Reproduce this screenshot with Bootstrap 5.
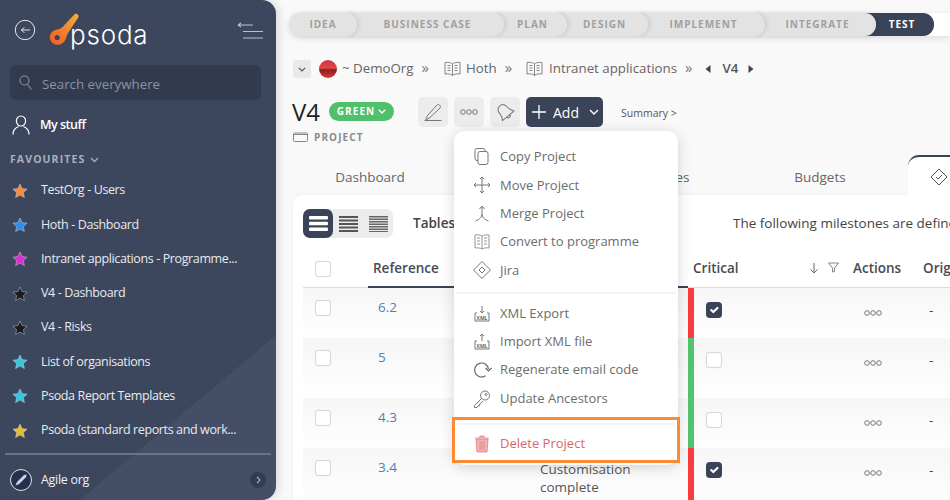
<!DOCTYPE html>
<html lang="en">
<head>
<meta charset="utf-8">
<title>Psoda</title>
<link href="https://cdn.jsdelivr.net/npm/bootstrap@5.3.0/dist/css/bootstrap.min.css" rel="stylesheet">
<style>
html,body{height:500px;overflow:hidden}
body{font-family:"Open Sans",sans-serif;background:#f9f9f9;color:#555;font-size:13px}
svg{display:block;flex:none}
.side{width:276px;height:500px;flex:none;color:#e9ebef;border-radius:0 14px 14px 0;background:linear-gradient(140deg,#3c465d 0 77.5%,#454e67 77.5%);box-shadow:3px 0 10px rgba(0,0,0,.12);position:relative;z-index:5;padding:14px 5px 0 5px}
.side>*{flex:none}
.toprow{height:36px;padding-left:9px}
.backicon{margin-top:4px}
.logomark{margin-left:13px;margin-top:-1px}
.wordmark{font-family:Inter,sans-serif;font-weight:300;font-size:26px;line-height:30px;letter-spacing:.8px;color:#fff;margin-left:-11px;margin-top:6px}
.searchbox{margin:15px 10px 0 5px;height:35px;background:#323a4e;border-radius:6px;color:#8b93a5;font-size:13.3px;padding-left:9px;gap:10px}
.searchbox span{padding-top:4px}
.mystuff{height:35px;margin-top:7.5px;padding-left:7px;gap:10px;color:#fff;font-weight:600;font-size:12.5px;letter-spacing:-.5px}
.favhead{margin:9px 0 0 5px;font-size:10.5px;font-weight:700;letter-spacing:1.1px;color:#a9afbc;height:17px;gap:5px}
.favlist{margin-top:5px}
.favrow{height:34.3px;padding-left:7px;gap:13px;font-size:12.5px;letter-spacing:-.38px;color:#e8eaee;white-space:nowrap}
.sidehr{height:2px;background:#697287;margin:5.3px 0 0 0;width:266px}
.orgrow{height:45px;padding:5px 0 0 5px;gap:9px;font-size:12.5px;font-weight:500;letter-spacing:-.3px;color:#eef0f3;width:266px}
.orgdot{width:22px;height:22px;border-radius:50%;border:1px solid #dfe3ea;background:#27304a}
.orgnext{width:16px;height:16px;border-radius:50%;background:#333b4f;margin-left:auto;margin-right:5px}
.content{flex:1;min-width:0;height:500px;position:relative;overflow:hidden;padding-top:13px}
.stages{margin-left:13px;height:23px;background:#fff;box-shadow:0 2px 6px rgba(0,0,0,.12);border-radius:10px 0 0 10px}
.stage{height:23px;background:#e3e3e3;border-radius:0 11px 11px 0;margin-left:-11px;box-shadow:2px 0 4px rgba(0,0,0,.1);color:#a0a0a0;font-size:10px;font-weight:700;letter-spacing:1px;padding-left:11px;padding-right:6px;position:relative;flex:none}
.stage:first-child{margin-left:0;border-radius:10px 11px 11px 10px;padding-left:0;padding-right:0}
.stage-now{background:#3a4459;color:#fff;box-shadow:none}
.crumbs{margin:24px 0 0 17px;height:18px;font-size:13.3px;color:#666;white-space:nowrap}
.crumbtoggle{width:18px;height:18px;border-radius:3px;background:#e9e9e9;margin-right:8px}
.avatar{width:18px;height:18px;border-radius:50%;background:linear-gradient(#c9344c 0,#e2473b 45%,#8c1f25 55%,#d9372f 100%);margin-right:5px}
.chev{color:#777;font-size:15px;margin-bottom:4px}
.headrow{margin:19px 0 0 16px;height:30px}
.titleword{font-size:24px;line-height:30px;color:#222;width:37px}
.ragpill{width:65px;height:19px;border-radius:10px;background:#4fc06b;color:#fff;font-size:10px;font-weight:700;letter-spacing:1.1px;gap:3px;margin-top:-1px}
.toolbtn{width:30px;height:30px;background:#ececec;border-radius:5px;padding:0;border:0;margin-right:6px}
.addbtn{width:77px;height:30px;background:#3a4459;border-radius:5px;color:#fff;font-size:14px;border:0;padding:0 0 0 4px;gap:5px}
.summarylink{font-size:10.5px;color:#555;margin:4px 0 0 18px}
.kind{margin:2px 0 0 17px;height:16px;gap:6px;font-size:10px;font-weight:700;letter-spacing:1.1px;color:#8a8a8a}
.tabrow{margin:10px 0 0 19px;height:40px;white-space:nowrap;color:#666;font-size:13.5px}
.tabitem{width:150px;flex:none;text-align:center;line-height:44px}
.tabon{margin-left:13px;width:120px;flex:none;background:#fff;border-radius:11px 0 0 0;border-top:2px solid #3a4459;padding:11px 0 0 22px}
.sheet{margin-left:17px;width:657px;background:#fff;border-radius:10px 0 0 0;height:320px;padding:14px 0 0 10px;box-shadow:0 0 5px rgba(0,0,0,.06)}
.densities{width:90px;height:29px;background:#ececec;border-radius:7px;flex:none}
.density{width:30px;height:29px;border-radius:7px}
.density-on{background:#3a4459}
.sheethead{height:29px;font-size:13.5px;white-space:nowrap;color:#444}
.tabletitle{margin-left:20px;font-weight:600;width:320px;flex:none}
.miletable{table-layout:fixed;width:690px;margin:12px 0 0 0;border-collapse:separate;border-spacing:0;font-size:13.5px}
.miletable th{height:38px;font-weight:600;color:#4a4a55;border-bottom:1px solid #ddd;vertical-align:middle;padding:0 0 0 5px;background:#fff;white-space:nowrap;position:relative}
.miletable td{padding:0;vertical-align:top;background:linear-gradient(#f6f6f6,#fff);border:0}
.th-ref{border-bottom:2px solid #3a4459 !important}
.rowtall{height:60px}.rowshort{height:50px}
.tick{width:16px;height:16px;margin:0;border:1px solid #d4d7de;border-radius:3px;box-shadow:0 0 1px rgba(0,0,0,.1)}
.tick:checked{background-color:#3a4459;border-color:#3a4459}
.th-check{padding:6px 0 0 12px !important}
.cell-check{padding:12px 0 0 12px !important}
.cell-ref{padding:9px 0 0 10px !important;color:#4f80b5}
.cell-name{padding:12px 0 0 2px !important;line-height:18px;color:#555}
.cell-crit{padding:14px 0 0 12px !important;border-left:6px solid #f93c3c !important}
.crit-ok{border-left-color:#52c36f !important}
.cell-act{padding:22px 0 0 16px !important}
.cell-orig{padding:12px 0 0 11px !important;color:#444}
.sorticons{position:absolute;right:9px;top:12px;gap:9px}
.actionsmenu{display:block;width:224px;height:334px;left:0;top:34px;margin:0;padding:12px 0 0 0;border:0;border-radius:10px;box-shadow:0 2px 14px rgba(0,0,0,.16);z-index:20}
.menuitem{height:28.3px;padding:0 0 0 18px;gap:8px;color:#6d6d6d;font-size:13px;background:none;white-space:nowrap}
.menuitem svg{width:20px;height:20px}
.menuline{margin:8px 3px 5px 3px;border-top:2px solid #f3f3f3;opacity:1}
.menuline-low{margin:10px 3px 5px 3px}
.menudanger{color:#d9686a}
.callout{position:absolute;left:-2px;top:286px;width:228px;height:46px;border:3px solid #fb8a33;pointer-events:none}
.grouphost{position:relative}
</style>
</head>
<body class="d-flex">
<aside class="side d-flex flex-column">
  <div class="toprow d-flex align-items-start">
    <svg width="22" height="22" viewBox="0 0 22 22" class="backicon" fill="none" stroke="#e6e9ee" stroke-width="1"><circle cx="11" cy="12" r="9.700"/><path d="M15.500 12H7.500M10 9.500 7.500 12l2.500 2.500" stroke-linecap="round"/></svg>
    <svg width="32" height="34" viewBox="0 0 32 34" class="logomark"><defs><linearGradient id="lg" x1="0" y1="1" x2="1" y2="0"><stop offset="0" stop-color="#ef5a2a"/><stop offset=".55" stop-color="#f4872f"/><stop offset="1" stop-color="#f7ae3a"/></linearGradient></defs><path fill-rule="evenodd" d="M25.500 1.200c2.300-1.500 5 .8 3.800 3.300l-9.300 14c-1.100 1.700-1.700 2.800-2.500 5.200-1.200 4.800-4.600 8-8.700 8C4 31.700.8 28.500.8 24.400c0-4 3.100-7.200 7.100-7.900 3-.4 4.700-1.300 6.400-3.300zM8.200 22a2.600 2.600 0 1 0 .01 0z" fill="url(#lg)"/></svg>
    <span class="wordmark">psoda</span>
    <svg width="26" height="18" viewBox="0 0 26 18" class="ms-auto me-2 mt-2" fill="none" stroke="#b9bfcb" stroke-width="1.100"><path d="M1 3h15M1 3l3-2M1 3l3 2M6 9.500h20M6 16h20"/></svg>
  </div>
  <div class="searchbox d-flex align-items-center">
    <svg width="13" height="15" viewBox="0 0 13 15" fill="none" stroke="#8b93a5" stroke-width="1.100"><circle cx="5.500" cy="5.500" r="4.500"/><path d="M8.500 9.500 12.500 14.500"/></svg>
    <span>Search everywhere</span>
  </div>
  <div class="mystuff d-flex align-items-center">
    <svg width="18" height="20" viewBox="0 0 18 20" fill="none" stroke="#fff" stroke-width="1.200"><ellipse cx="9" cy="6" rx="4.600" ry="5"/><path d="M1 19.500c0-4.500 3-7 5.500-8M17 19.500c0-4.500-3-7-5.500-8"/></svg>
    <span>My stuff</span>
  </div>
  <div class="favhead d-flex align-items-center">FAVOURITES
    <svg width="9" height="6" viewBox="0 0 9 6" fill="none" stroke="#a9afbc" stroke-width="1.300"><path d="M1 1l3.500 3.500L8 1"/></svg>
  </div>
  <div class="favlist">
    <div class="favrow d-flex align-items-center"><svg width="16" height="16" viewBox="0 0 16 16"><path d="M8 1l2.100 4.600 5 .6-3.700 3.400 1 5L8 12.100 3.600 14.600l1-5L.9 6.200l5-.6z" fill="#f58b3d" stroke="#c9cdd6" stroke-width=".5"/></svg><span>TestOrg - Users</span></div>
    <div class="favrow d-flex align-items-center"><svg width="16" height="16" viewBox="0 0 16 16"><path d="M8 1l2.100 4.600 5 .6-3.700 3.400 1 5L8 12.100 3.600 14.600l1-5L.9 6.200l5-.6z" fill="#2f8ce8" stroke="#c9cdd6" stroke-width=".5"/></svg><span>Hoth - Dashboard</span></div>
    <div class="favrow d-flex align-items-center"><svg width="16" height="16" viewBox="0 0 16 16"><path d="M8 1l2.100 4.600 5 .6-3.700 3.400 1 5L8 12.100 3.600 14.600l1-5L.9 6.200l5-.6z" fill="#e02bd0" stroke="#c9cdd6" stroke-width=".5"/></svg><span>Intranet applications - Programme...</span></div>
    <div class="favrow d-flex align-items-center"><svg width="16" height="16" viewBox="0 0 16 16"><path d="M8 1l2.100 4.600 5 .6-3.700 3.400 1 5L8 12.100 3.600 14.600l1-5L.9 6.200l5-.6z" fill="#1c1c1e" stroke="#9aa0ac" stroke-width=".7"/></svg><span>V4 - Dashboard</span></div>
    <div class="favrow d-flex align-items-center"><svg width="16" height="16" viewBox="0 0 16 16"><path d="M8 1l2.100 4.600 5 .6-3.700 3.400 1 5L8 12.100 3.600 14.600l1-5L.9 6.200l5-.6z" fill="#1c1c1e" stroke="#9aa0ac" stroke-width=".7"/></svg><span>V4 - Risks</span></div>
    <div class="favrow d-flex align-items-center"><svg width="16" height="16" viewBox="0 0 16 16"><path d="M8 1l2.100 4.600 5 .6-3.700 3.400 1 5L8 12.100 3.600 14.600l1-5L.9 6.200l5-.6z" fill="#35c6e0" stroke="#c9cdd6" stroke-width=".5"/></svg><span>List of organisations</span></div>
    <div class="favrow d-flex align-items-center"><svg width="16" height="16" viewBox="0 0 16 16"><path d="M8 1l2.100 4.600 5 .6-3.700 3.400 1 5L8 12.100 3.600 14.600l1-5L.9 6.200l5-.6z" fill="#35c6e0" stroke="#c9cdd6" stroke-width=".5"/></svg><span>Psoda Report Templates</span></div>
    <div class="favrow d-flex align-items-center"><svg width="16" height="16" viewBox="0 0 16 16"><path d="M8 1l2.100 4.600 5 .6-3.700 3.400 1 5L8 12.100 3.600 14.600l1-5L.9 6.200l5-.6z" fill="#e8bd2e" stroke="#c9cdd6" stroke-width=".5"/></svg><span>Psoda (standard reports and work...</span></div>
  </div>
  <div class="sidehr"></div>
  <div class="orgrow d-flex align-items-center">
    <span class="orgdot d-flex align-items-center justify-content-center"><svg width="14" height="14" viewBox="0 0 14 14"><path d="M1.500 12.500 3 9l7-7 2.500-.5-.3 2.500-7 7z" fill="#bcd6f2"/></svg></span>
    <span>Agile org</span>
    <span class="orgnext d-flex align-items-center justify-content-center"><svg width="5" height="8" viewBox="0 0 5 8" fill="none" stroke="#a9afbc" stroke-width="1.200"><path d="M1 .8 4 4 1 7.200"/></svg></span>
  </div>
</aside>

<main class="content">
  <div class="stages d-flex">
    <div class="stage d-flex align-items-center justify-content-center" style="z-index:9;width:68px">IDEA</div>
    <div class="stage d-flex align-items-center justify-content-center" style="z-index:8;width:158px">BUSINESS CASE</div>
    <div class="stage d-flex align-items-center justify-content-center" style="z-index:7;width:74px">PLAN</div>
    <div class="stage d-flex align-items-center justify-content-center" style="z-index:6;width:92px">DESIGN</div>
    <div class="stage d-flex align-items-center justify-content-center" style="z-index:5;width:128px">IMPLEMENT</div>
    <div class="stage d-flex align-items-center justify-content-center" style="z-index:4;width:122px">INTEGRATE</div>
    <div class="stage stage-now d-flex align-items-center justify-content-center" style="z-index:3;width:69px">TEST</div>
  </div>

  <div class="crumbs d-flex align-items-center">
    <span class="crumbtoggle d-flex align-items-center justify-content-center"><svg width="8" height="5" viewBox="0 0 8 5" fill="none" stroke="#555" stroke-width="1.200"><path d="M.8.8 4 4 7.200.8"/></svg></span>
    <span class="avatar"></span>
    <span>~ DemoOrg</span>
    <span class="chev" style="margin-left:8px;margin-right:15px">»</span>
    <svg width="17" height="16" viewBox="0 0 17 16" fill="none" stroke="#777" stroke-width=".9"><path d="M8.500 3C7 1.500 4 1 1 1.500v11.500c3-.5 6 0 7.500 1.500C10 13 13 12.500 16 13V1.500C13 1 10 1.500 8.500 3zM8.500 3v11.500M3.500 4.500h3M3.500 7h3M3.500 9.500h3M10.500 4.500h3M10.500 7h3M10.500 9.500h3"/></svg>
    <span style="margin-left:5px">Hoth</span>
    <span class="chev" style="margin-left:8px;margin-right:14px">»</span>
    <svg width="17" height="16" viewBox="0 0 17 16" fill="none" stroke="#777" stroke-width=".9"><path d="M8.500 3C7 1.500 4 1 1 1.500v11.500c3-.5 6 0 7.500 1.500C10 13 13 12.500 16 13V1.500C13 1 10 1.500 8.500 3zM8.500 3v11.500M3.500 4.500h3M3.500 7h3M3.500 9.500h3M10.500 4.500h3M10.500 7h3M10.500 9.500h3"/></svg>
    <span style="margin-left:6px">Intranet applications</span>
    <span class="chev" style="margin-left:8px;margin-right:13px">»</span>
    <svg width="6" height="8" viewBox="0 0 6 8" fill="#444"><path d="M5.500 0v8L.5 4z"/></svg>
    <span class="fw-semibold" style="margin:0 10px 0 11px;color:#555">V4</span>
    <svg width="6" height="8" viewBox="0 0 6 8" fill="#444"><path d="M.5 0v8l5-4z"/></svg>
  </div>

  <div class="headrow d-flex align-items-center">
    <span class="titleword">V4</span>
    <span class="ragpill d-flex align-items-center justify-content-center">GREEN<svg width="8" height="5" viewBox="0 0 8 5" fill="none" stroke="#fff" stroke-width="1.300"><path d="M.8.8 4 4 7.200.8"/></svg></span>
    <button class="toolbtn d-flex align-items-center justify-content-center" style="margin-left:24px"><svg width="20" height="20" viewBox="0 0 20 20" fill="none" stroke="#777" stroke-width="1"><path d="M1.500 18.500h17M2.500 18.500l2-5L14 3c1.500-1.500 4.500 1 3 3L7 15.500z"/></svg></button>
    <div class="grouphost">
      <button class="toolbtn d-flex align-items-center justify-content-center"><svg width="18" height="6" viewBox="0 0 18 6" fill="none" stroke="#777" stroke-width="1"><circle cx="3" cy="3" r="2.300"/><circle cx="9" cy="3" r="2.300"/><circle cx="15" cy="3" r="2.300"/></svg></button>
      <div class="dropdown-menu show actionsmenu">
        <div class="menuitem d-flex align-items-center"><svg viewBox="0 0 20 20" fill="none" stroke="#777" stroke-width="1"><rect x="3" y="1.500" width="10" height="12" rx="2"/><rect x="6" y="4.500" width="10" height="13" rx="2" fill="#fff"/></svg><span>Copy Project</span></div>
        <div class="menuitem d-flex align-items-center"><svg viewBox="0 0 20 20" fill="none" stroke="#777" stroke-width="1"><path d="M10 2v16M2 10h16M8 4l2-2 2 2M8 16l2 2 2-2M4 8l-2 2 2 2M16 8l2 2-2 2"/></svg><span>Move Project</span></div>
        <div class="menuitem d-flex align-items-center"><svg viewBox="0 0 20 20" fill="none" stroke="#777" stroke-width="1"><path d="M10 2v8M7.500 5 10 2l2.500 3M3.500 17c4-1.500 6.500-4 6.500-7 0 3 2.500 5.500 6.500 7"/></svg><span>Merge Project</span></div>
        <div class="menuitem d-flex align-items-center"><svg viewBox="0 0 20 20" fill="none" stroke="#888" stroke-width=".9"><path d="M10 4C8.500 3 5 2.500 3 3v13c2-.5 5.500 0 7 1 1.500-1 5-1.500 7-1V3c-2-.5-5.500 0-7 1zM10 4v13M5 6h3M5 9h3M5 12h3M12 6h3M12 9h3M12 12h3"/></svg><span>Convert to programme</span></div>
        <div class="menuitem d-flex align-items-center"><svg viewBox="0 0 20 20" fill="none" stroke="#777" stroke-width="1"><path d="M10 1.500 18.500 10 10 18.500 1.500 10z"/><path d="M10 7 13 10 10 13 7 10z"/></svg><span>Jira</span></div>
        <hr class="menuline">
        <div class="menuitem d-flex align-items-center"><svg viewBox="0 0 20 20" fill="none" stroke="#777" stroke-width="1"><path d="M5 9H3v8h14V9h-2M10 2v7M8 7l2 2 2-2"/><text x="10" y="15.500" font-size="5" font-weight="700" text-anchor="middle" fill="#666" stroke="none">XML</text></svg><span>XML Export</span></div>
        <div class="menuitem d-flex align-items-center"><svg viewBox="0 0 20 20" fill="none" stroke="#777" stroke-width="1"><path d="M5 9H3v8h14V9h-2M10 9V2M8 4l2-2 2 2"/><text x="10" y="15.500" font-size="5" font-weight="700" text-anchor="middle" fill="#666" stroke="none">XML</text></svg><span>Import XML file</span></div>
        <div class="menuitem d-flex align-items-center"><svg viewBox="0 0 20 20" fill="none" stroke="#666" stroke-width="1.200"><path d="M13.500 15.800A7 7 0 1 1 16.500 9M13.500 8l3 3 3-3"/></svg><span>Regenerate email code</span></div>
        <div class="menuitem d-flex align-items-center"><svg viewBox="0 0 20 20" fill="none" stroke="#777" stroke-width="1"><circle cx="13" cy="6.500" r="4.500"/><circle cx="14" cy="5.500" r="1"/><path d="M9.500 9.500 2.500 16.500v2h2.500l1-1.500 1.500-.2.300-1.800 3.200-3"/></svg><span>Update Ancestors</span></div>
        <hr class="menuline menuline-low">
        <div class="menuitem menudanger d-flex align-items-center"><svg viewBox="0 0 20 20" fill="#f2b5b5" stroke="#e07b7d" stroke-width=".8"><path d="M4 5h12l-1 13H5zM3 4h14M7.500 3.500 8 2h4l.5 1.500M8 7v9M10 7v9M12 7v9"/></svg><span>Delete Project</span></div>
        <div class="callout"></div>
      </div>
    </div>
    <button class="toolbtn d-flex align-items-center justify-content-center"><svg width="20" height="20" viewBox="0 0 20 20" fill="none" stroke="#777" stroke-width="1"><path transform="rotate(-40 10 10)" d="M10 2c-3.500 0-5 3-5 6 0 3-1 5-2.500 7h15C16 13 15 11 15 8c0-3-1.500-6-5-6zM8 15c0 2.500 4 2.500 4 0" stroke-linejoin="round"/></svg></button>
    <button class="addbtn d-flex align-items-center"><svg width="18" height="18" viewBox="0 0 18 18" fill="none" stroke="#fff" stroke-width="1.300"><path d="M9 2v14M2 9h14"/></svg>Add<svg width="10" height="6" viewBox="0 0 10 6" fill="none" stroke="#fff" stroke-width="1.400" class="ms-auto me-1"><path d="M1 1l4 4 4-4"/></svg></button>
    <span class="summarylink">Summary &gt;</span>
  </div>

  <div class="kind d-flex align-items-center"><svg width="15" height="10" viewBox="0 0 15 10" fill="none" stroke="#888" stroke-width="1"><rect x=".5" y="1" width="14" height="8.500" rx="1"/><path d="M.5 2.500h14"/></svg>PROJECT</div>

  <div class="tabrow d-flex">
    <div class="tabitem">Dashboard</div>
    <div class="tabitem">Plan</div>
    <div class="tabitem">Issues</div>
    <div class="tabitem">Budgets</div>
    <div class="tabon"><svg width="18" height="18" viewBox="0 0 18 18" fill="none" stroke="#555" stroke-width="1"><path d="M9 1l8 8-8 8-8-8z"/><path d="M6 9l2 2 4-4"/></svg></div>
  </div>

  <section class="sheet">
    <div class="sheethead d-flex align-items-center">
      <div class="densities d-flex">
        <div class="density density-on d-flex align-items-center justify-content-center"><svg width="19" height="15" viewBox="0 0 19 15" fill="#fff"><rect y="0" width="19" height="3.500" rx="1"/><rect y="5.700" width="19" height="3.500" rx="1"/><rect y="11.400" width="19" height="3.500" rx="1"/></svg></div>
        <div class="density d-flex align-items-center justify-content-center"><svg width="19" height="16" viewBox="0 0 19 16" fill="#555"><rect y="0" width="19" height="2"/><rect y="3.500" width="19" height="2"/><rect y="7" width="19" height="2"/><rect y="10.500" width="19" height="2"/><rect y="14" width="19" height="2"/></svg></div>
        <div class="density d-flex align-items-center justify-content-center"><svg width="19" height="16" viewBox="0 0 19 16" fill="#666"><rect y="0" width="19" height="1.500"/><rect y="2.500" width="19" height="1.500"/><rect y="5" width="19" height="1.500"/><rect y="7.500" width="19" height="1.500"/><rect y="10" width="19" height="1.500"/><rect y="12.500" width="19" height="1.500"/><rect y="15" width="19" height="1"/></svg></div>
      </div>
      <span class="tabletitle">Tables</span>
      <span>The following milestones are defined for this project.</span>
    </div>
    <table class="miletable">
      <colgroup><col style="width:65px"><col style="width:170px"><col style="width:150px"><col style="width:160px"><col style="width:70px"><col></colgroup>
      <thead><tr>
        <th class="text-start th-check"><input class="form-check-input tick" type="checkbox" aria-label="Select all"></th>
        <th class="th-ref">Reference</th>
        <th class="th-ref"></th>
        <th>Critical<span class="sorticons d-flex"><svg width="10" height="12" viewBox="0 0 10 12" fill="none" stroke="#666" stroke-width="1"><path d="M5 1v10M1.500 7.500 5 11l3.500-3.500"/></svg><svg width="11" height="11" viewBox="0 0 11 11" fill="none" stroke="#777" stroke-width=".9"><path d="M.5 1h10L6.500 6v3.500L4.500 10V6z"/></svg></span></th>
        <th>Actions</th>
        <th>Orig</th>
      </tr></thead>
      <tbody>
        <tr class="rowshort">
          <td class="cell-check"><input class="form-check-input tick" type="checkbox" aria-label="Select 6.2"></td>
          <td class="cell-ref">6.2</td><td class="cell-name"></td>
          <td class="cell-crit"><input class="form-check-input tick" type="checkbox" checked aria-label="Critical"></td>
          <td class="cell-act"><svg width="18" height="6" viewBox="0 0 18 6" fill="none" stroke="#777" stroke-width="1"><circle cx="3" cy="3" r="2.300"/><circle cx="9" cy="3" r="2.300"/><circle cx="15" cy="3" r="2.300"/></svg></td>
          <td class="cell-orig">-</td>
        </tr>
        <tr class="rowtall">
          <td class="cell-check"><input class="form-check-input tick" type="checkbox" aria-label="Select 5"></td>
          <td class="cell-ref">5</td><td class="cell-name"></td>
          <td class="cell-crit crit-ok"><input class="form-check-input tick" type="checkbox" aria-label="Critical"></td>
          <td class="cell-act"><svg width="18" height="6" viewBox="0 0 18 6" fill="none" stroke="#777" stroke-width="1"><circle cx="3" cy="3" r="2.300"/><circle cx="9" cy="3" r="2.300"/><circle cx="15" cy="3" r="2.300"/></svg></td>
          <td class="cell-orig">-</td>
        </tr>
        <tr class="rowshort">
          <td class="cell-check"><input class="form-check-input tick" type="checkbox" aria-label="Select 4.3"></td>
          <td class="cell-ref">4.3</td><td class="cell-name"></td>
          <td class="cell-crit crit-ok"><input class="form-check-input tick" type="checkbox" aria-label="Critical"></td>
          <td class="cell-act"><svg width="18" height="6" viewBox="0 0 18 6" fill="none" stroke="#777" stroke-width="1"><circle cx="3" cy="3" r="2.300"/><circle cx="9" cy="3" r="2.300"/><circle cx="15" cy="3" r="2.300"/></svg></td>
          <td class="cell-orig">-</td>
        </tr>
        <tr class="rowtall">
          <td class="cell-check"><input class="form-check-input tick" type="checkbox" aria-label="Select 3.4"></td>
          <td class="cell-ref">3.4</td><td class="cell-name">Customisation complete</td>
          <td class="cell-crit"><input class="form-check-input tick" type="checkbox" checked aria-label="Critical"></td>
          <td class="cell-act"><svg width="18" height="6" viewBox="0 0 18 6" fill="none" stroke="#777" stroke-width="1"><circle cx="3" cy="3" r="2.300"/><circle cx="9" cy="3" r="2.300"/><circle cx="15" cy="3" r="2.300"/></svg></td>
          <td class="cell-orig">-</td>
        </tr>
      </tbody>
    </table>
  </section>
</main>
<script src="https://cdn.jsdelivr.net/npm/bootstrap@5.3.0/dist/js/bootstrap.bundle.min.js"></script>
</body>
</html>
